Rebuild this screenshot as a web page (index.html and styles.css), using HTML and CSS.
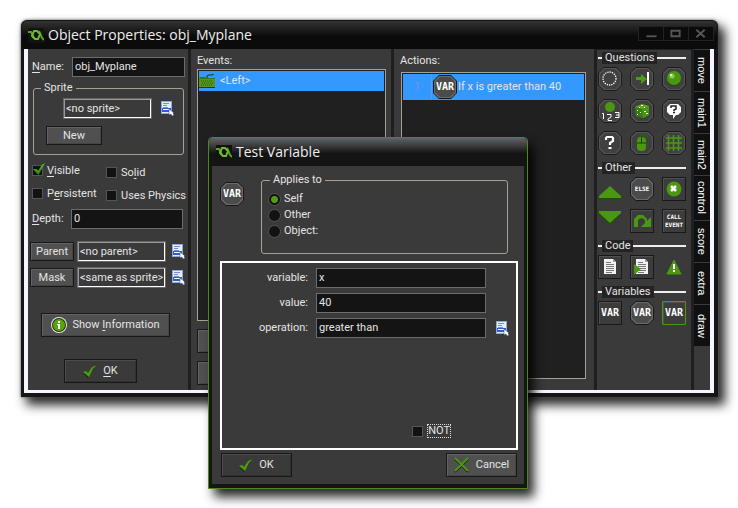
FILE: index.html
```html
<!DOCTYPE html>
<html lang="en">
<head>
<meta charset="utf-8">
<title>Object Properties: obj_Myplane</title>
<link rel="stylesheet" href="styles.css">
</head>
<body>
<svg class="defs" aria-hidden="true">
  <symbol id="logo" viewBox="0 0 16 15">
    <rect width="16" height="15" fill="#10140d"/>
    <path d="M0 4h3l3 6M11 3l3 7 2 2" fill="none" stroke="#5d9c28" stroke-width="2"/>
    <path d="M6 3h3l3 3-2 5H7L4 8z" fill="none" stroke="#72b834" stroke-width="2"/>
  </symbol>
  <symbol id="picker" viewBox="0 0 13 15">
    <path d="M0 0h11v13H0z" fill="#8fa9e0"/>
    <path d="M1 1h9v11H1z" fill="#e6ecfa"/>
    <path d="M2 2h6v1H2zM2 4h4v1H2zM2 6h5v1H2z" fill="#7290d2"/>
    <path d="M1 7h9v4H1z" fill="#2f5fc0"/>
    <path d="M2 8h6v1H2z" fill="#fff"/>
    <path d="M8 8v6l2-1 1 2 2-1-1-2h1z" fill="#fff" stroke="#33456e" stroke-width=".5"/>
  </symbol>
  <symbol id="octagon" viewBox="0 0 24 24">
    <path d="M6 0h12l6 6v12l-6 6H6l-6-6V6z" fill="#171717"/>
    <path d="M6 1h12l5 5v12l-5 5H6l-5-5V6z" fill="#6b6b6b"/>
    <path d="M7 2h10l5 5v10l-5 5H7l-5-5V7z" fill="#4b4b4b"/>
  </symbol>
  <symbol id="hexdark" viewBox="0 0 24 24">
    <path d="M6 0h12l6 6v12l-6 6H6l-6-6V6z" fill="#1b1b1b"/>
    <path d="M6 1h12l5 5v12l-5 5H6l-5-5V6z" fill="#555"/>
    <path d="M7 2h10l5 5v10l-5 5H7l-5-5V7z" fill="#404040"/>
  </symbol>
  <symbol id="square" viewBox="0 0 24 24">
    <path d="M0 0h24v24H0z" fill="#191919"/>
    <path d="M1 1h22v22H1z" fill="#505050"/>
    <path d="M2 2h21v21H2z" fill="#3c3c3c"/>
  </symbol>
  <symbol id="tick" viewBox="0 0 14 13">
    <path d="M0 8l3-1 2 2 4-7 5-2-4 5-5 8z" fill="#162b06"/>
    <path d="M0 7l3-1 2 2 4-6 5-2-4 4-4 8z" fill="#4c9a12"/>
  </symbol>
  <symbol id="page" viewBox="0 0 24 24">
    <path d="M6 4h9l3 3v12H6z" fill="#f2f2f2"/>
    <path d="M15 4l3 3h-3z" fill="#999"/>
    <path d="M8 7h5M8 9h8M8 11h8M8 13h8M8 15h8M8 17h6" stroke="#777" transform="translate(0 .5)"/>
  </symbol>
</svg>

<main class="desktop">
  <section class="window">
    <header class="titlebar">
      <svg class="logo"><use href="#logo"/></svg>
      <h1>Object Properties: obj_Myplane</h1>
      <div class="controls">
        <button type="button" aria-label="Minimize"><svg viewBox="0 0 24 14"><path d="M7 9h11v2H7z" fill="#555"/></svg></button>
        <button type="button" aria-label="Maximize"><svg viewBox="0 0 24 14"><path d="M7 4h9v6H7z" fill="none" stroke="#555" stroke-width="2"/></svg></button>
        <button type="button" aria-label="Close"><svg viewBox="0 0 24 14"><path d="M7 3l9 8M16 3l-9 8" stroke="#585858" stroke-width="2"/></svg></button>
      </div>
    </header>
    <div class="body">
      <form class="props">
        <div class="row name-row">
          <label for="name"><u>N</u>ame:</label>
          <input class="field" id="name" type="text" value="obj_Myplane">
        </div>
        <fieldset class="group sprite">
          <legend>Sprite</legend>
          <div class="row">
            <input class="field raised" type="text" aria-label="Sprite" value="&lt;no sprite&gt;" readonly>
            <button class="pick" type="button" aria-label="Choose sprite"><svg><use href="#picker"/></svg></button>
          </div>
          <button class="btn new" type="button">New</button>
        </fieldset>
        <div class="checks">
          <label><input type="checkbox" checked><span><u>V</u>isible</span></label>
          <label class="low"><input type="checkbox"><span>So<u>l</u>id</span></label>
          <label><input type="checkbox"><span>P<u>e</u>rsistent</span></label>
          <label class="low"><input type="checkbox"><span>Uses Physics</span></label>
        </div>
        <div class="row depth-row">
          <label for="depth"><u>D</u>epth:</label>
          <input class="field" id="depth" type="text" value="0">
        </div>
        <div class="row link-row">
          <button class="btn" type="button">Parent</button>
          <input class="field raised" type="text" aria-label="Parent" value="&lt;no parent&gt;" readonly>
          <button class="pick" type="button" aria-label="Choose parent"><svg><use href="#picker"/></svg></button>
        </div>
        <div class="row link-row">
          <button class="btn" type="button">Mask</button>
          <input class="field raised" type="text" aria-label="Mask" value="&lt;same as sprite&gt;" readonly>
          <button class="pick" type="button" aria-label="Choose mask"><svg><use href="#picker"/></svg></button>
        </div>
        <button class="btn tall info" type="button">
          <svg class="i16" viewBox="0 0 16 16"><circle cx="8" cy="8" r="8" fill="#e8e8e8"/><circle cx="8" cy="8" r="7" fill="#1c3208"/><circle cx="8" cy="8" r="6" fill="#5aa50e"/><path d="M7 4h2v2H7zM6 7h3v5H7V8H6z" fill="#fff"/></svg>
          <span>Show <u>I</u>nformation</span>
        </button>
        <button class="btn tall dark ok" type="button"><svg class="tick"><use href="#tick"/></svg><span><u>O</u>K</span></button>
      </form>

      <section class="events">
        <h2>Events:</h2>
        <ul class="list">
          <li class="event">
            <svg viewBox="0 0 17 14"><path d="M8 4V2l2-1h3l2-1" fill="none" stroke="#17350a" stroke-width="1"/><path d="M0 5l1-2h5l1 1h9v10H0z" fill="#347a10"/><path d="M0 5h16v8H0z" fill="#55961b"/><path d="M2 7h12M3 9h11M2 11h12" stroke="#28600c" stroke-dasharray="1 1"/><path d="M0 13h16v1H0z" fill="#1d430b"/></svg>
            <span>&lt;Left&gt;</span>
          </li>
        </ul>
        <button class="btn tall" type="button" aria-label="Delete"></button>
        <button class="btn tall" type="button" aria-label="Change"></button>
      </section>

      <section class="actions">
        <h2>Actions:</h2>
        <ol class="list">
          <li class="action">
            <span class="num">1</span>
            <svg class="i24" viewBox="0 0 24 24"><use href="#octagon"/><text class="glyph" x="12" y="15" text-anchor="middle">VAR</text></svg>
            <span>If x is greater than 40</span>
          </li>
        </ol>
      </section>

      <aside class="palette">
        <section>
          <h3><span>Questions</span></h3>
          <div class="tools">
            <button type="button" aria-label="Empty"><svg class="i24"><use href="#hexdark"/><circle cx="11.500" cy="11.500" r="6.500" fill="none" stroke="#fff" stroke-width="1.300" stroke-dasharray="1.300 1"/></svg></button>
            <button type="button" aria-label="Collision"><svg class="i24"><use href="#hexdark"/><path d="M6 10h5V7l6 5-6 5v-4H6z" fill="#4d9a14"/><path d="M17 5h2v13h-2z" fill="#fff"/></svg></button>
            <button type="button" aria-label="Object"><svg class="i24"><use href="#hexdark"/><circle cx="12" cy="12" r="7" fill="#214a09"/><circle cx="12" cy="11" r="7" fill="#4a9812"/><circle cx="10" cy="9" r="2.500" fill="#8ccc50"/><circle cx="9" cy="8" r="1" fill="#fff"/></svg></button>
            <button type="button" aria-label="Number"><svg class="i24"><use href="#hexdark"/><circle cx="12" cy="8" r="5" fill="#4a9812"/><path d="M4 14.500h1.500V20M9 15.500h4v2.500l-3 2v1.500h4M17 13.500h4v5h-4M18 16h3" fill="none" stroke="#fff"/></svg></button>
            <button type="button" aria-label="Chance"><svg class="i24"><use href="#hexdark"/><path d="M5 8l7-3 7 2v9l-6 3-7-2z" fill="#397e0d"/><path d="M5 8l7-3 7 2-6 3z" fill="#61aa23"/><path d="M12 10l7-3v9l-6 3z" fill="#4b9615"/><path d="M7 11h1v1H7zM10 13h1v1h-1zM7 15h1v1H7zM14 12h2v1h-2zM16 14h2v1h-2zM11 6h2v1h-2zM14 8h1v1h-1zM9 8h1v1H9z" fill="#fff"/></svg></button>
            <button type="button" aria-label="Question"><svg class="i24"><use href="#hexdark"/><path d="M8 5h8l3 3v5l-3 3h-2l-3 4v-4H8l-3-3V8z" fill="#fff"/><path d="M9 9V7h5v3l-2 1v1M11 13.500h2" fill="none" stroke="#222" stroke-width="1.500"/></svg></button>
            <button type="button" aria-label="Expression"><svg class="i24"><use href="#hexdark"/><path d="M8 9V7l1-1h5l1 1v3l-3 2v2M10.500 17h3" fill="none" stroke="#fff" stroke-width="2.200"/></svg></button>
            <button type="button" aria-label="Mouse"><svg class="i24"><use href="#hexdark"/><rect x="7" y="6" width="9" height="14" rx="4" fill="#4a9812"/><path d="M7 12h9M11.500 6v6" stroke="#1c3c0c"/><path d="M11 6V4h4l3 3" fill="none" stroke="#28600c" stroke-width="1.500"/></svg></button>
            <button type="button" aria-label="Grid"><svg class="i24"><use href="#hexdark"/><path d="M6.500 4v16M11.500 4v16M16.500 4v16M4 7h16M4 12h16M4 17h16" stroke="#4a9812" stroke-width="1.500"/></svg></button>
          </div>
        </section>
        <section>
          <h3><span>Other</span></h3>
          <div class="tools">
            <button type="button" aria-label="Start block"><svg class="i24"><path d="M1 20v2h22v-2z" fill="#234d0c"/><path d="M12 9l11 10v2H1v-2z" fill="#4a9812"/></svg></button>
            <button type="button" aria-label="Else"><svg class="i24"><use href="#octagon"/><text class="glyph small" x="12" y="14" text-anchor="middle">ELSE</text></svg></button>
            <button type="button" aria-label="Exit"><svg class="i24"><use href="#square"/><circle cx="12" cy="12" r="7.500" fill="#4a9812"/><path d="M9 9l5 5M14 9l-5 5" stroke="#fff" stroke-width="2.500"/></svg></button>
            <button type="button" aria-label="End block"><svg class="i24"><path d="M1 3v2l11 11L23 5V3z" fill="#234d0c"/><path d="M1 2v2l11 10L23 4V2z" fill="#4a9812"/></svg></button>
            <button type="button" aria-label="Repeat"><svg class="i24"><use href="#square"/><path d="M4 18V10l4-4h5l4 4v2l4-4v10H11l4-4v-3l-3-2-3 1-1 2v6z" fill="#4a9812"/></svg></button>
            <button type="button" aria-label="Call event"><svg class="i24"><use href="#square"/><text class="glyph small" x="12" y="10" text-anchor="middle">CALL</text><text class="glyph small" x="12" y="18" text-anchor="middle">EVENT</text></svg></button>
          </div>
        </section>
        <section>
          <h3><span>Code</span></h3>
          <div class="tools">
            <button type="button" aria-label="Execute code"><svg class="i24"><use href="#square"/><use href="#page"/></svg></button>
            <button type="button" aria-label="Execute script"><svg class="i24"><use href="#square"/><use href="#page"/><path d="M4 9l7 5-7 6z" fill="#4a9812"/></svg></button>
            <button type="button" aria-label="Comment"><svg class="i24"><path d="M12 5l7 14H5z" fill="#4a9812" stroke="#4a9812"/><path d="M11 9h2v5h-2zM11 15h2v2h-2z" fill="#fff"/></svg></button>
          </div>
        </section>
        <section>
          <h3><span>Variables</span></h3>
          <div class="tools">
            <button type="button" aria-label="Set variable"><svg class="i24"><use href="#square"/><text class="glyph" x="12" y="15" text-anchor="middle">VAR</text></svg></button>
            <button type="button" aria-label="Test variable"><svg class="i24"><use href="#octagon"/><text class="glyph" x="12" y="15" text-anchor="middle">VAR</text></svg></button>
            <button type="button" aria-label="Draw variable"><svg class="i24"><use href="#square"/><path d="M.5.5h23v23H.5z" fill="none" stroke="#4a9812"/><text class="glyph" x="12" y="15" text-anchor="middle">VAR</text></svg></button>
          </div>
        </section>
      </aside>

      <nav class="tabs">
        <button type="button">move</button>
        <button type="button">main1</button>
        <button type="button">main2</button>
        <button class="long" type="button">control</button>
        <button type="button">score</button>
        <button type="button">extra</button>
        <button type="button">draw</button>
      </nav>
    </div>
  </section>

  <section class="dialog" role="dialog" aria-label="Test Variable">
    <header class="dialog-title">
      <svg class="logo"><use href="#logo"/></svg>
      <h1>Test Variable</h1>
    </header>
    <form class="dialog-body">
      <div class="top">
        <svg class="i24" viewBox="0 0 24 24"><use href="#octagon"/><text class="glyph" x="12" y="15" text-anchor="middle">VAR</text></svg>
        <fieldset class="group applies">
          <legend>Applies to</legend>
          <label><input type="radio" name="target" checked>Self</label>
          <label><input type="radio" name="target">Other</label>
          <label><input type="radio" name="target">Object:</label>
        </fieldset>
      </div>
      <div class="frame">
        <div class="pair"><label for="variable">variable:</label><input class="field" id="variable" type="text" value="x"></div>
        <div class="pair"><label for="value">value:</label><input class="field" id="value" type="text" value="40"></div>
        <div class="pair">
          <label for="operation">operation:</label><input class="field" id="operation" type="text" value="greater than" readonly>
          <button class="pick" type="button" aria-label="Choose operation"><svg><use href="#picker"/></svg></button>
        </div>
        <label class="not"><input type="checkbox"><span>NOT</span></label>
      </div>
      <footer class="buttons">
        <button class="btn tall dark" type="button"><svg class="tick"><use href="#tick"/></svg>OK</button>
        <button class="btn tall" type="button"><svg class="i16" viewBox="0 0 16 16"><path d="M1 2l13 13M14 2L1 15" stroke="#142707" stroke-width="2"/><path d="M1 1l13 13M14 1L1 14" stroke="#4a9812" stroke-width="2"/></svg>Cancel</button>
      </footer>
    </form>
  </section>
</main>
</body>
</html>
```
FILE: styles.css
```css
:root {
  --panel: #3a3a3a;
  --list: #202020;
  --edge: #a5a294;
  --text: #e4e4e4;
  --green: #4a8a18;
  --ui: Roboto, "Liberation Sans", sans-serif;
}

* { box-sizing: border-box; }

body {
  margin: 0;
  background: #fff;
  color: var(--text);
  font: 11px/16px var(--ui);
}

h1, h2, h3, ul, ol, fieldset { margin: 0; padding: 0; font-weight: normal; }
ul, ol { list-style: none; }
button, input { margin: 0; color: inherit; font: inherit; border-radius: 0; }
button { padding: 0; border: 0; background: none; }
svg { display: block; flex: none; }
u { text-underline-offset: 2px; }

.defs { position: absolute; width: 0; height: 0; }
.i24 { width: 24px; height: 24px; }
.i16 { width: 16px; height: 16px; }
.tick { width: 14px; height: 13px; }
.logo { width: 16px; height: 15px; }
.glyph { fill: #fff; font: bold 10px "DejaVu Sans Mono", monospace; }
.glyph.small { font-size: 6px; }

.desktop { position: relative; min-height: 508px; padding: 20px 20px 0 21px; }

/* main window */
.window {
  border: 1px solid #151515;
  border-bottom-width: 4px;
  border-radius: 6px 6px 0 0;
  background: #151515;
  box-shadow: 0 0 3px #555, 6px 7px 11px 1px rgba(0, 0, 0, .85);
}

.titlebar {
  display: flex;
  align-items: center;
  gap: 4px;
  height: 28px;
  padding: 0 3px 0 6px;
  border-radius: 5px 5px 0 0;
  background: linear-gradient(#333, #0b0b0b 55%);
}

.titlebar h1, .dialog-title h1 {
  font: 14px/20px "Open Sans", sans-serif;
  color: #eee;
  white-space: nowrap;
}

.controls { display: flex; gap: 1px; margin: 0 0 4px auto; border: 1px solid #222; background: #222; }
.controls button { width: 24px; height: 13px; background: #0b0b0b; }
.controls svg { width: 24px; height: 13px; }

.body {
  display: grid;
  grid-template-columns: 160px 1fr 1fr 94px 16px;
  column-gap: 3px;
  margin: 0 3px 0 2px;
  border: solid #f3f5ff;
  border-width: 0 4px 3px;
  background: #1f1f1f;
}

.body > * { min-width: 0; background: var(--panel); }

/* shared controls */
.row { display: flex; align-items: center; }

.field {
  min-width: 0;
  height: 20px;
  padding: 0 0 2px 2px;
  border: 1px solid #6c6c6c;
  background: #141414;
  outline: 0;
}

.field.raised {
  height: 21px;
  padding: 0 0 0 1px;
  border: 2px solid #fff;
  border-top-color: #999;
  border-left-color: #999;
  outline: 1px solid #666;
  outline-offset: -1px;
  background: var(--panel);
}

.btn {
  display: flex;
  align-items: center;
  justify-content: center;
  height: 19px;
  border: 1px solid #181818;
  background: #505050;
  box-shadow: inset 1px 1px #646464, inset -1px -1px #444;
}

.btn.tall { height: 24px; }
.btn.dark { background: var(--panel); box-shadow: inset 1px 1px #4c4c4c, inset -1px -1px #303030; }
.pick, .pick svg { width: 13px; height: 15px; }

.group { min-width: 0; border: 1px solid var(--edge); border-radius: 3px; }
.group legend { height: 14px; line-height: 14px; }

input[type="checkbox"], input[type="radio"] {
  flex: none;
  appearance: none;
  width: 11px;
  height: 11px;
  border: 1px solid #555;
  background: #121212;
}

input[type="checkbox"]:checked { position: relative; }
input[type="checkbox"]:checked::after {
  content: "";
  position: absolute;
  inset: -3px -3px 0 0;
  background: linear-gradient(#5dc416, #347e0b);
  clip-path: polygon(0 50%, 25% 50%, 45% 62%, 75% 15%, 100% 0, 45% 100%);
}

input[type="radio"] { width: 13px; height: 13px; border-radius: 50%; }
input[type="radio"]:checked { background: radial-gradient(#559b18 3px, #121212 4px); }

/* object properties */
.props { display: flex; flex-direction: column; padding: 8px 3px 7px 4px; }
.props > .row > label { flex: none; }
.name-row label { width: 40px; }
.name-row input, .depth-row input { flex: 1; }
.depth-row label { width: 39px; }
.depth-row { margin: 7px 2px 0 0; }

.sprite { margin: 4px 1px 0; padding: 3px 9px 9px 12px; }
.sprite legend { margin-left: -5px; padding: 0 3px; }
.sprite .field { flex: 1; margin: 0 9px 0 17px; }
.sprite .btn { width: 56px; margin-top: 7px; }

.checks { display: grid; grid-template-columns: 74px 1fr; row-gap: 6px; margin-top: 7px; }
.checks label { display: flex; align-items: center; gap: 4px; height: 17px; white-space: nowrap; }
.checks .low { padding-top: 4px; }

.link-row { margin: 12px 0 0 -2px; }
.link-row + .link-row { margin-top: 5px; }
.link-row .btn { width: 44px; margin-right: 3px; }
.link-row .field { flex: 1; margin-right: 6px; }

.info { align-self: center; gap: 5px; width: 129px; margin: 25px 0 0 -6px; }
.ok { align-self: center; gap: 6px; width: 73px; margin: 22px 0 0 -16px; }

/* events and actions */
.events, .actions { display: flex; flex-direction: column; padding: 4px 5px 5px 6px; }
.events h2, .actions h2 { font-size: 11px; line-height: 16px; }
.list { border: 1px solid var(--edge); padding: 1px; background: var(--list); }
.events .list { flex: 1; margin-bottom: 8px; }
.events .btn { width: 80px; }
.events .btn + .btn { margin-top: 8px; }
.event { display: flex; align-items: center; gap: 4px; height: 20px; background: #3399ff; }
.event svg { width: 17px; height: 14px; }
.actions { padding: 4px 8px 11px 7px; }
.actions h2 { margin: 0 0 3px -1px; }
.actions .list { flex: 1; }
.action { display: flex; align-items: center; gap: 1px; height: 26px; background: #3399ff; white-space: nowrap; }
.action .num { width: 29px; border-right: 1px solid #5a9af0; line-height: 26px; text-align: center; color: #7f90dc; }

/* action palette */
.palette { display: flex; flex-direction: column; gap: 7px; padding: 2px 5px 0 1px; border-top: 1px solid #222; }
.palette h3 { display: flex; align-items: center; margin-bottom: 3px; line-height: 12px; font-size: 11px; }
.palette h3 span { padding: 0 3px; background: #232323; }
.palette h3::before, .palette h3::after { content: ""; width: 4px; height: 2px; background: #eee; }
.palette h3::after { flex: 1; }
.tools { display: grid; grid-template-columns: repeat(3, 24px); gap: 8px; }

.tabs { display: flex; flex-direction: column; padding-top: 1px; }
.tabs button {
  height: 42px;
  border-bottom: 1px solid #3a3a3a;
  background: #101010;
  font: 11px/16px "Liberation Sans", sans-serif;
  writing-mode: vertical-rl;
  color: #fff;
}
.tabs .long { height: 45px; }

/* test variable dialog */
.dialog {
  position: absolute;
  left: 208px;
  top: 137px;
  width: 320px;
  border: 1px solid var(--green);
  border-radius: 4px 4px 0 0;
  background: #151515;
  box-shadow: 6px 8px 11px rgba(0, 0, 0, .85);
}

.dialog-title {
  display: flex;
  align-items: center;
  gap: 4px;
  height: 28px;
  padding: 0 7px;
  border-radius: 4px 4px 0 0;
  background: linear-gradient(#636363, #141414 55%);
}

.dialog-body { margin: 0 3px 4px; padding: 7px 6px 7px 8px; background: var(--panel); }
.top { display: flex; align-items: flex-start; }
.top > svg { margin-top: 9px; }
.applies { flex: 1; margin: 0 10px 0 17px; padding: 4px 6px 14px; }
.applies legend { margin-left: 2px; padding: 0 3px; }
.applies label { display: flex; align-items: center; gap: 3px; }

.frame {
  display: flex;
  flex-direction: column;
  gap: 5px;
  height: 189px;
  margin-top: 7px;
  padding: 5px 6px 10px 8px;
  border: 2px solid #fff;
}
.pair { display: flex; align-items: center; }
.pair label { width: 78px; margin-right: 8px; text-align: right; }
.pair .field { flex: none; width: 170px; }
.pair .pick { margin-left: 10px; }

.not { display: flex; align-items: center; gap: 4px; margin: auto 59px 0 auto; }
.not span { line-height: 12px; border: 1px dotted #ddd; }

.buttons { display: flex; justify-content: space-between; margin: 3px 1px 0; }
.buttons .btn { gap: 6px; width: 71px; }
```
